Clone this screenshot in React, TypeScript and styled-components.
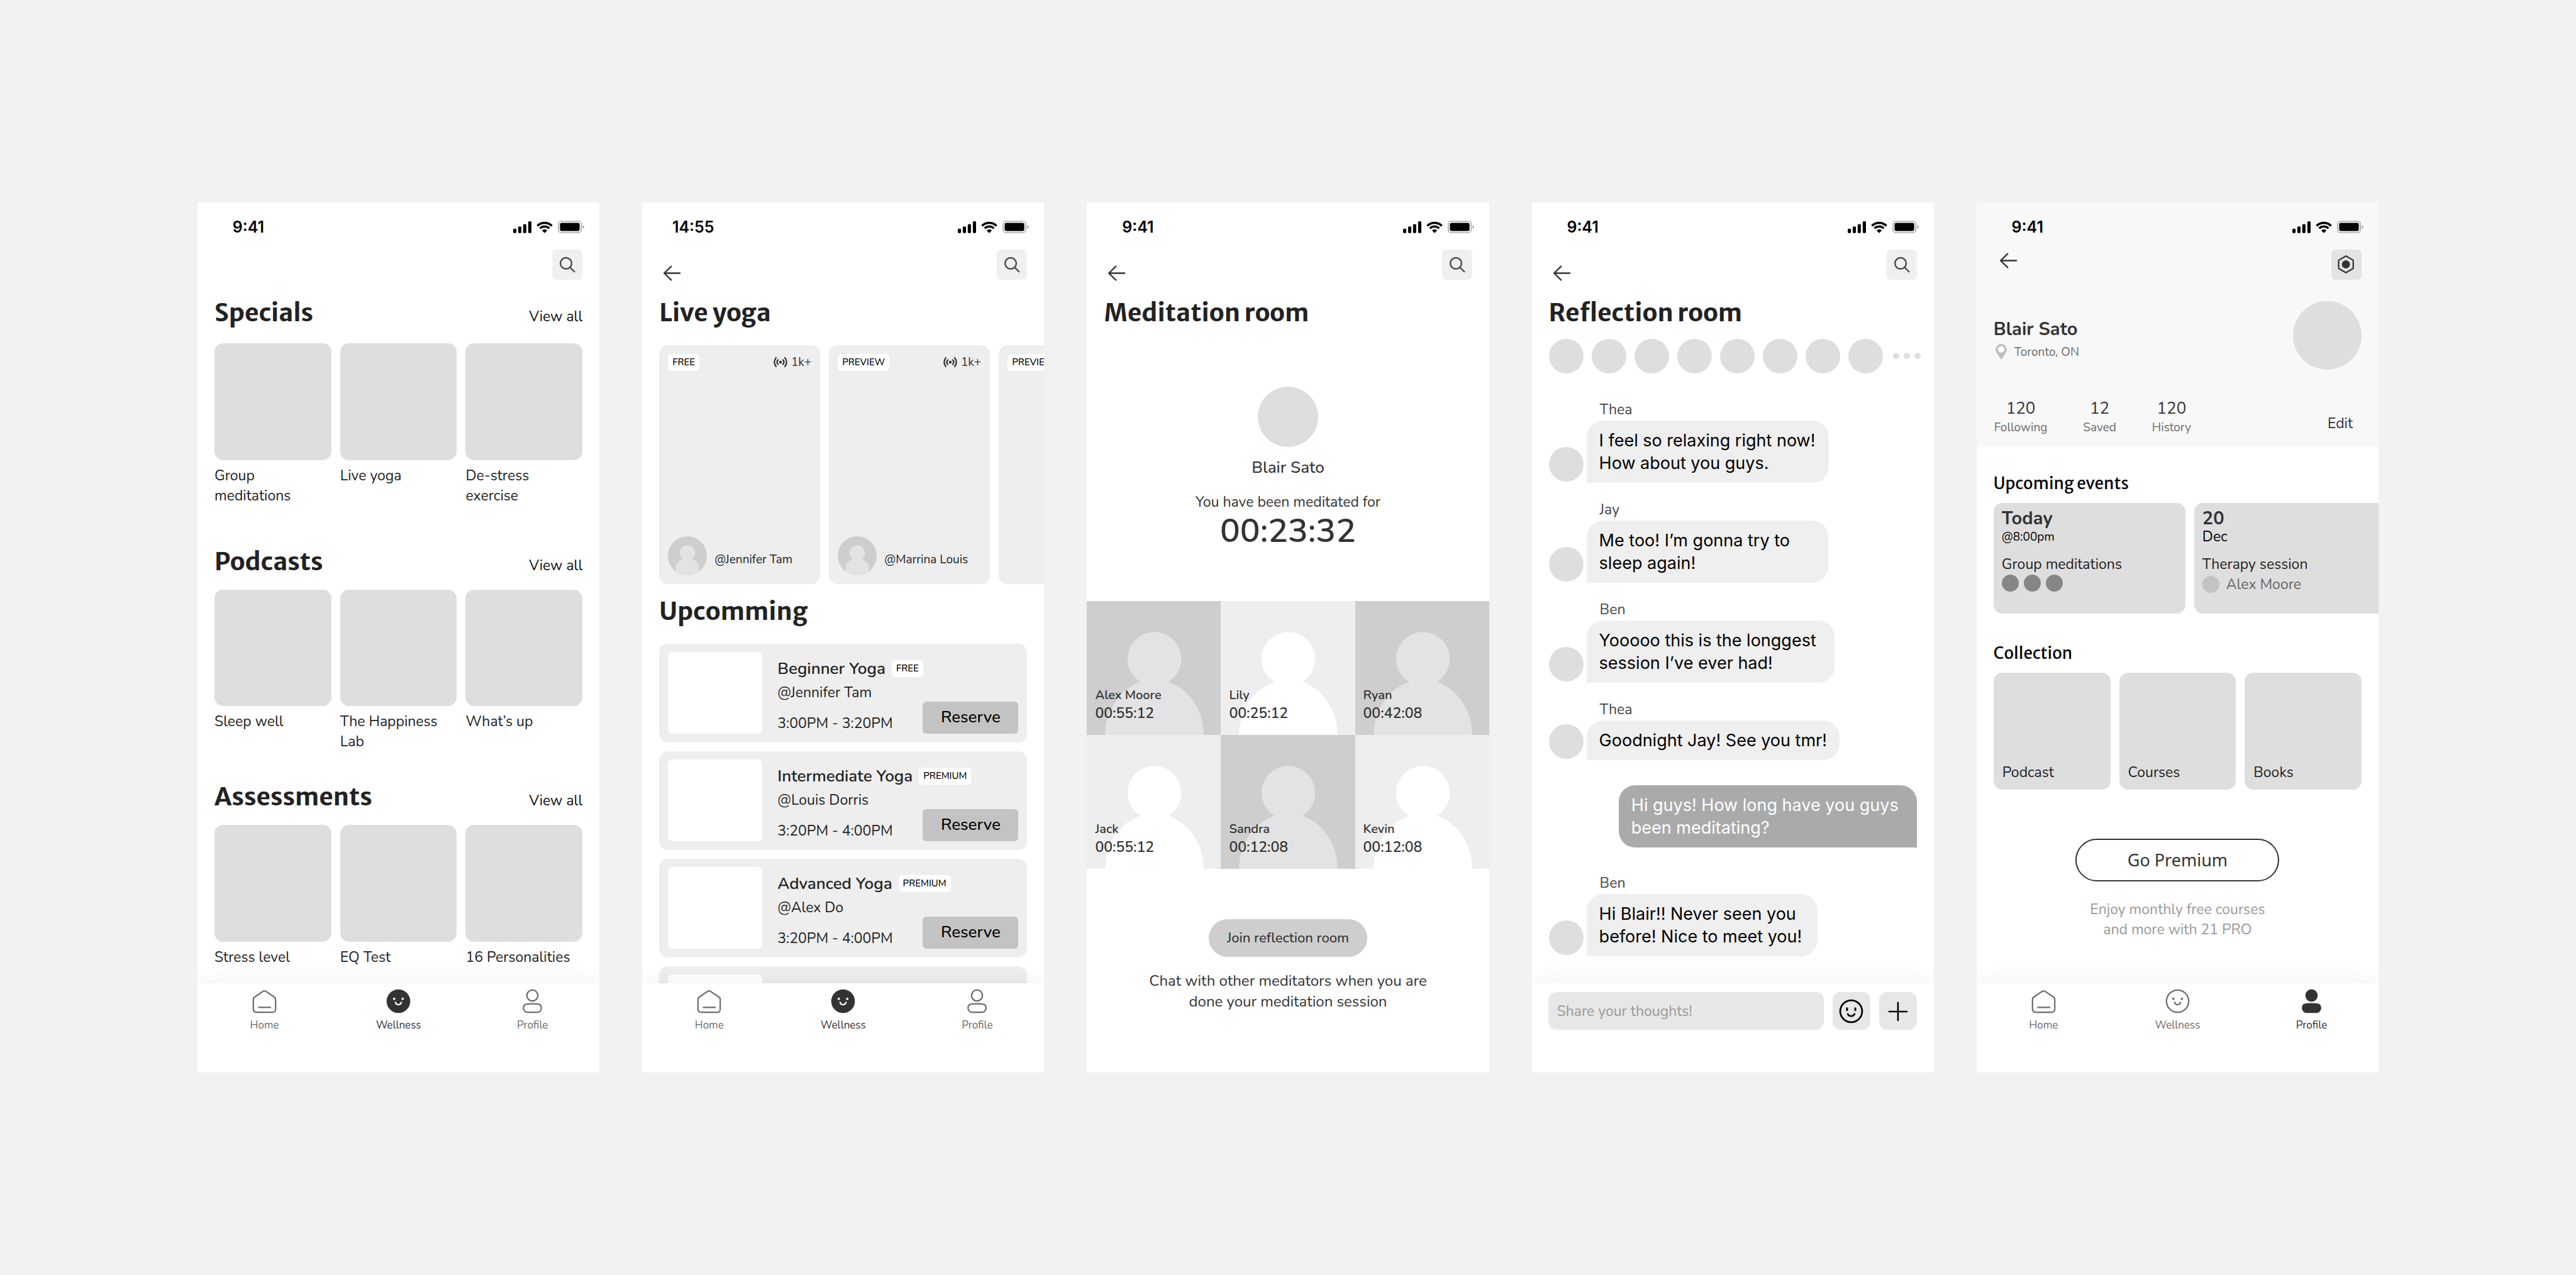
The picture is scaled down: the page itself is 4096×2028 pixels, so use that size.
import React from 'react';
import styled, { createGlobalStyle, css } from 'styled-components';

const body = `'Nunito', 'Lato', sans-serif`;
const display = `'Merriweather Sans', 'Open Sans', sans-serif`;
const system = `'Inter', 'Roboto', sans-serif`;

const GlobalStyle = createGlobalStyle`
  *, *::before, *::after { box-sizing: border-box; }
  body { margin: 0; background: #f2f2f2; color: #222; font-family: ${body}; }
  h1, h2, h3, p, ul { margin: 0; padding: 0; }
  ul { list-style: none; }
  button, input { font: inherit; color: inherit; border: 0; margin: 0; padding: 0; background: none; }
  a { color: inherit; text-decoration: none; }
  svg { display: block; flex: none; }
`;

/* ---------- shell ---------- */

const Board = styled.main`
  min-height: 100vh;
  padding: 0 314px;
  display: flex;
  align-items: center;
  gap: 68px;
`;

const Phone = styled.article`
  flex: 1;
  min-width: 0;
  aspect-ratio: 375 / 812;
  display: flex;
  flex-direction: column;
  overflow: hidden;
  background: #fff;
`;

const Content = styled.div`
  flex: 1;
  min-height: 0;
  overflow: hidden;
`;

const StatusRow = styled.div`
  height: 75px;
  padding: 4px 24px 0 35px;
  display: flex;
  align-items: center;
  justify-content: space-between;
  color: #000;
`;

const Clock = styled.time`
  width: 92px;
  text-align: center;
  font: 600 25px/32px ${system};
`;

const Indicators = styled.div`
  display: flex;
  align-items: center;
  gap: 8px;
`;

const Toolbar = styled.div<{ $inset?: boolean }>`
  height: 58px;
  padding: 0 27px 0 ${(p) => (p.$inset ? 30 : 27)}px;
  display: flex;
  align-items: ${(p) => (p.$inset ? 'flex-start' : 'flex-end')};
  justify-content: space-between;
`;

const BackButton = styled.button<{ $short?: boolean }>`
  width: 41px;
  height: ${(p) => (p.$short ? 35 : 41)}px;
  display: flex;
  align-items: center;
  justify-content: center;
  color: #333;
`;

const SquareButton = styled.button<{ $dark?: boolean }>`
  width: 48px;
  height: 48px;
  margin-left: auto;
  align-self: flex-start;
  border-radius: 7px;
  background: ${(p) => (p.$dark ? '#e3e3e3' : '#f0f0f0')};
`;

const Title = styled.h1`
  font: 700 39px/48px ${display};
  color: #222;
`;

const TitleBar = styled.div<{ $top: number }>`
  margin-top: ${(p) => p.$top}px;
  padding: 0 27px;
  display: flex;
  align-items: baseline;
  justify-content: space-between;
`;

/* ---------- icons ---------- */

const Signal = () => (
  <svg width="29" height="19" viewBox="0 0 34 22" fill="currentColor">
    <rect x="0" y="13.7" width="6" height="8" rx="1.8" />
    <rect x="9.3" y="9.4" width="6" height="12.3" rx="1.8" />
    <rect x="18.5" y="5" width="6" height="16.7" rx="1.8" />
    <rect x="28" y="0" width="6" height="21.7" rx="1.8" />
  </svg>
);

const Wifi = () => (
  <svg width="26" height="19" viewBox="0 0 31 22" fill="none" stroke="currentColor" strokeWidth="4.2">
    <path d="M1.7 8.3a19.5 19.5 0 0 1 27.6 0" />
    <path d="M6.8 13.2a12.4 12.4 0 0 1 17.4 0" />
    <path d="M15.5 22l-4.9-5.1a7.1 7.1 0 0 1 9.8 0z" fill="currentColor" stroke="none" />
  </svg>
);

const Battery = () => (
  <svg width="42" height="20" viewBox="0 0 49 23">
    <rect x="1" y="1" width="42.4" height="21" rx="5.6" fill="none" stroke="#ababab" strokeWidth="2" />
    <rect x="4" y="4" width="36.4" height="15" rx="3" fill="#000" />
    <path d="M46 8c1.7 .7 2.9 2 2.9 3.5s-1.2 2.8-2.9 3.5z" fill="#a6a6a6" />
  </svg>
);

const SearchIcon = () => (
  <svg width="48" height="48" viewBox="0 0 56 56" fill="none" stroke="#4a4a4a" strokeWidth="2.8" strokeLinecap="round">
    <circle cx="25.7" cy="25.5" r="10.4" />
    <path d="M33.3 33.1l8 8" />
  </svg>
);

const SettingsIcon = () => (
  <svg width="48" height="48" viewBox="0 0 56 56" fill="none" stroke="#333" strokeWidth="2.6" strokeLinejoin="round">
    <path d="M27 12l13.5 7.7v15.4L27 42.8l-13.5-7.7V19.7z" />
    <circle cx="27" cy="27.4" r="7.6" fill="#333" stroke="none" />
  </svg>
);

const ArrowIcon = () => (
  <svg width="41" height="41" viewBox="0 0 48 48" fill="none" stroke="currentColor" strokeWidth="2.8" strokeLinecap="round" strokeLinejoin="round">
    <path d="M22.5 11.3L9.5 24l13 12.7M9.5 24h29.2" />
  </svg>
);

const HomeIcon = () => (
  <svg width="41" height="41" viewBox="0 0 48 48" fill="none" stroke="currentColor" strokeWidth="2.6">
    <path d="M3.3 39V20.8a5.5 5.5 0 0 1 2.6-4.7L21.2 5.7a5.4 5.4 0 0 1 5.6 0l15.3 10.4a5.5 5.5 0 0 1 2.6 4.7V39a5.7 5.7 0 0 1-5.7 5.7H9A5.7 5.7 0 0 1 3.3 39z" />
    <path d="M12.3 35.5h24" />
  </svg>
);

const SmileIcon = ({ filled = false }: { filled?: boolean }) => {
  const face = filled ? '#fff' : 'currentColor';
  return (
    <svg width="41" height="41" viewBox="0 0 48 48" fill="none">
      <circle cx="24" cy="24" r="20.7" fill={filled ? 'currentColor' : 'none'} stroke="currentColor" strokeWidth="2.6" />
      <circle cx="16.1" cy="19.5" r="2.2" fill={face} />
      <circle cx="31.9" cy="19.5" r="2.2" fill={face} />
      <path d="M18.4 25c.4 3.2 2.4 5.4 5.6 5.4s5.2-2.2 5.6-5.4" stroke={face} strokeWidth="2.7" />
    </svg>
  );
};

const EmojiIcon = () => (
  <svg width="41" height="41" viewBox="0 0 48 48" fill="none" stroke="#000" strokeWidth="3.2">
    <circle cx="24" cy="24" r="20.4" />
    <path d="M16.3 18.5v3.500M31.700 18.500v3.500" strokeWidth="3.6" strokeLinecap="round" />
    <path d="M17.3 28c1.2 3.600 3.300 5 6.700 5s5.500-1.400 6.700-5" />
  </svg>
);

const PlusIcon = () => (
  <svg width="41" height="41" viewBox="0 0 48 48" fill="none" stroke="#000" strokeWidth="3" strokeLinecap="round">
    <path d="M24.5 8v33M8 24.500h33" />
  </svg>
);

const PersonIcon = ({ filled = false }: { filled?: boolean }) => (
  <svg width="41" height="41" viewBox="0 0 48 48" fill={filled ? 'currentColor' : 'none'} stroke="currentColor" strokeWidth="2.6">
    <circle cx="24" cy="13.4" r="10.2" />
    <path d="M7.3 36.5c0-4.5 3.4-7 7.5-7.3 6-.5 12.4-.5 18.4 0 4.1.3 7.5 2.8 7.5 7.3v.4c0 4.3-3.5 7.8-7.8 7.8H15.1c-4.3 0-7.8-3.5-7.8-7.8z" />
  </svg>
);

const BroadcastIcon = () => (
  <svg width="22" height="18" viewBox="0 0 27 21" fill="none" stroke="#333" strokeWidth="2.8" strokeLinecap="round">
    <circle cx="13.5" cy="10.5" r="2.7" fill="#333" stroke="none" />
    <path d="M8.6 6.2q-3.6 4.3 0 8.6M18.4 6.2q3.6 4.3 0 8.6" />
    <path d="M4.8 2q-6.4 8.5 0 17M22.2 2q6.4 8.5 0 17" />
  </svg>
);

const PinIcon = () => (
  <svg width="18" height="25" viewBox="0 0 21 29">
    <path d="M10.5 29L2.6 17.3A10.5 10.5 0 1 1 18.4 17.3z" fill="#bfbfbf" />
    <circle cx="10.5" cy="10" r="6" fill="#fff" />
  </svg>
);

const AvatarPerson = () => (
  <svg width="62" height="62" viewBox="0 0 62 62">
    <defs>
      <clipPath id="avatar-clip"><circle cx="31" cy="31" r="31" /></clipPath>
    </defs>
    <g clipPath="url(#avatar-clip)">
      <rect width="62" height="62" fill="#cecece" />
      <circle cx="31" cy="26.5" r="12.3" fill="#e3e3e3" />
      <ellipse cx="31" cy="50.5" rx="18.6" ry="15.5" fill="#e3e3e3" />
    </g>
  </svg>
);

/* ---------- shared pieces ---------- */

const StatusBar = ({ time }: { time: string }) => (
  <StatusRow>
    <Clock>{time}</Clock>
    <Indicators>
      <Signal />
      <Wifi />
      <Battery />
    </Indicators>
  </StatusRow>
);

const TopBar = ({ back = true }: { back?: boolean }) => (
  <Toolbar>
    {back && <BackButton type="button" aria-label="Back"><ArrowIcon /></BackButton>}
    <SquareButton type="button" aria-label="Search"><SearchIcon /></SquareButton>
  </Toolbar>
);

const bottomBar = css`
  flex: none;
  position: relative;
  height: 142px;
  background: #fff;
  box-shadow: 0 0 34px rgba(0, 0, 0, 0.07);
`;

const Nav = styled.nav`
  ${bottomBar}
  display: grid;
  grid-template-columns: repeat(3, 1fr);
  align-items: start;
`;

const NavLink = styled.a<{ $active: boolean }>`
  padding-top: 8px;
  display: flex;
  flex-direction: column;
  align-items: center;
  gap: 6px;
  font-size: 17px;
  line-height: 24px;
  color: ${(p) => (p.$active ? '#333' : '#6b6b6b')};
`;

const BottomNav = ({ active }: { active: 'wellness' | 'profile' }) => (
  <Nav>
    <NavLink href="#home" $active={false}><HomeIcon />Home</NavLink>
    <NavLink href="#wellness" $active={active === 'wellness'}>
      <SmileIcon filled={active === 'wellness'} />Wellness
    </NavLink>
    <NavLink href="#profile" $active={active === 'profile'}>
      <PersonIcon filled={active === 'profile'} />Profile
    </NavLink>
  </Nav>
);

const Circle = styled.span<{ $size: number; $color?: string }>`
  flex: none;
  display: block;
  width: ${(p) => p.$size}px;
  height: ${(p) => p.$size}px;
  border-radius: 50%;
  background: ${(p) => p.$color ?? '#dedede'};
`;

const TileGrid = styled.ul<{ $top: number }>`
  margin-top: ${(p) => p.$top}px;
  padding: 0 27px;
  display: grid;
  grid-template-columns: repeat(3, 1fr);
  gap: 14px;
`;

const Tile = styled.div`
  aspect-ratio: 1;
  border-radius: 14px;
  background: #dedede;
  display: flex;
  align-items: flex-end;
  padding: 0 14px 11px;
  font-size: 23px;
  line-height: 32px;
`;

const TileLabel = styled.p`
  margin-top: 9px;
  max-width: 176px;
  min-height: 64px;
  font-size: 23px;
  line-height: 32px;
`;

/* ---------- wellness home ---------- */

const ViewAll = styled.a`
  font-size: 23px;
  line-height: 32px;
  color: #111;
`;

const shelves = [
  { title: 'Specials', top: 19, gap: 24, items: ['Group meditations', 'Live yoga', 'De-stress exercise'] },
  { title: 'Podcasts', top: 65, gap: 20, items: ['Sleep well', 'The Happiness Lab', 'What’s up'] },
  { title: 'Assessments', top: 48, gap: 20, items: ['Stress level', 'EQ Test', '16 Personalities'] },
];

const HomeScreen = () => (
  <Phone>
    <Content>
      <StatusBar time="9:41" />
      <TopBar back={false} />
      {shelves.map((shelf) => (
        <section key={shelf.title}>
          <TitleBar $top={shelf.top}>
            <Title as="h2">{shelf.title}</Title>
            <ViewAll href="#all">View all</ViewAll>
          </TitleBar>
          <TileGrid $top={shelf.gap}>
            {shelf.items.map((item) => (
              <li key={item}>
                <Tile />
                <TileLabel>{item}</TileLabel>
              </li>
            ))}
          </TileGrid>
        </section>
      ))}
    </Content>
    <BottomNav active="wellness" />
  </Phone>
);

/* ---------- live yoga ---------- */

const Carousel = styled.ul<{ $top: number }>`
  margin-top: ${(p) => p.$top}px;
  padding-left: 27px;
  display: flex;
  gap: 14px;
  overflow: hidden;
`;

const LiveCard = styled.li`
  flex: none;
  width: 256px;
  height: 380px;
  padding: 14px;
  border-radius: 14px;
  background: #eee;
  display: flex;
  flex-direction: column;
  justify-content: space-between;
`;

const CardTop = styled.div`
  display: flex;
  align-items: center;
  justify-content: space-between;
`;

const Viewers = styled.span`
  display: flex;
  align-items: center;
  gap: 6px;
  font-size: 19px;
  line-height: 26px;
  color: #333;
`;

const Host = styled.div`
  display: flex;
  align-items: flex-end;
  gap: 12px;
`;

const HostName = styled.span`
  padding-bottom: 12px;
  font-size: 19px;
  line-height: 26px;
  white-space: nowrap;
`;

const Chip = styled.span`
  flex: none;
  padding: 0 7px;
  border-radius: 6px;
  background: #fff;
  color: #000;
  font-size: 15px;
  font-weight: 500;
  line-height: 27px;
`;

const ClassList = styled.ul`
  margin-top: 27px;
  padding: 0 27px;
  display: grid;
  gap: 14px;
`;

const ClassCard = styled.li`
  padding: 13px 14px 14px;
  border-radius: 14px;
  background: #eee;
  display: flex;
  gap: 24px;
`;

const Thumb = styled.div`
  flex: none;
  width: 150px;
  height: 130px;
  border-radius: 7px;
  background: #fff;
`;

const ClassInfo = styled.div`
  flex: 1;
  padding-top: 10px;
  display: flex;
  flex-direction: column;
  font-size: 23px;
  line-height: 32px;
`;

const ClassTitle = styled.div`
  margin-bottom: 5px;
  display: flex;
  align-items: center;
  gap: 10px;

  h3 {
    font-size: 26px;
    font-weight: 600;
    line-height: 34px;
  }
`;

const ClassFoot = styled.div`
  margin-top: auto;
  height: 32px;
  display: flex;
  align-items: flex-end;
  justify-content: space-between;
`;

const ReserveButton = styled.button`
  width: 152px;
  height: 51px;
  border-radius: 6px;
  background: #c3c3c3;
  color: #000;
  font-size: 26px;
  font-weight: 500;
`;

const liveCards = [
  { badge: 'FREE', viewers: '1k+', host: '@Jennifer Tam' },
  { badge: 'PREVIEW', viewers: '1k+', host: '@Marrina Louis' },
  { badge: 'PREVIEW' },
];

const classes = [
  { name: 'Beginner Yoga', badge: 'FREE', host: '@Jennifer Tam', time: '3:00PM - 3:20PM' },
  { name: 'Intermediate Yoga', badge: 'PREMIUM', host: '@Louis Dorris', time: '3:20PM - 4:00PM' },
  { name: 'Advanced Yoga', badge: 'PREMIUM', host: '@Alex Do', time: '3:20PM - 4:00PM' },
];

const YogaScreen = () => (
  <Phone>
    <Content>
      <StatusBar time="14:55" />
      <TopBar />
      <TitleBar $top={19}><Title>Live yoga</Title></TitleBar>
      <Carousel $top={27}>
        {liveCards.map((card, i) => (
          <LiveCard key={i}>
            <CardTop>
              <Chip>{card.badge}</Chip>
              {card.viewers && <Viewers><BroadcastIcon />{card.viewers}</Viewers>}
            </CardTop>
            {card.host && <Host><AvatarPerson /><HostName>{card.host}</HostName></Host>}
          </LiveCard>
        ))}
      </Carousel>
      <TitleBar $top={20}><Title as="h2">Upcomming</Title></TitleBar>
      <ClassList>
        {classes.map((c) => (
          <ClassCard key={c.name}>
            <Thumb />
            <ClassInfo>
              <ClassTitle><h3>{c.name}</h3><Chip>{c.badge}</Chip></ClassTitle>
              <span>{c.host}</span>
              <ClassFoot>
                <span>{c.time}</span>
                <ReserveButton type="button">Reserve</ReserveButton>
              </ClassFoot>
            </ClassInfo>
          </ClassCard>
        ))}
        <ClassCard><Thumb /></ClassCard>
      </ClassList>
    </Content>
    <BottomNav active="wellness" />
  </Phone>
);

/* ---------- meditation room ---------- */

const Session = styled.section`
  height: 434px;
  padding-top: 93px;
  display: flex;
  flex-direction: column;
  align-items: center;
  color: #333;
`;

const SessionName = styled.h2`
  margin-top: 16px;
  font-size: 26px;
  font-weight: 500;
  line-height: 34px;
`;

const SessionNote = styled.p`
  margin-top: 22px;
  font-size: 23px;
  line-height: 32px;
`;

const Timer = styled.time`
  font-size: 53px;
  font-weight: 600;
  line-height: 60px;
`;

const RoomGrid = styled.ul`
  display: grid;
  grid-template-columns: repeat(3, 1fr);
`;

const RoomTile = styled.li<{ $dark: boolean }>`
  aspect-ratio: 1;
  display: grid;
  background: ${(p) => (p.$dark ? '#cecece' : '#eee')};
  color: ${(p) => (p.$dark ? '#e3e3e3' : '#fff')};

  > * { grid-area: 1 / 1; }
  > svg { width: 100%; height: 100%; }
`;

const RoomLabel = styled.div`
  align-self: end;
  padding: 0 13px 20px;
  color: #333;
  font-size: 23px;
  font-weight: 600;
  line-height: 29px;
  z-index: 1;
`;

const RoomName = styled.div`
  font-size: 20px;
`;

const JoinArea = styled.section`
  padding: 80px 27px 0;
  display: flex;
  flex-direction: column;
  align-items: center;
  color: #333;
`;

const JoinButton = styled.button`
  width: 252px;
  height: 60px;
  border-radius: 30px;
  background: #cecece;
  font-size: 22px;
  font-weight: 500;
`;

const JoinNote = styled.p`
  margin-top: 22px;
  max-width: 460px;
  font-size: 24px;
  line-height: 33px;
  text-align: center;
`;

const people = [
  { name: 'Alex Moore', time: '00:55:12', dark: true },
  { name: 'Lily', time: '00:25:12', dark: false },
  { name: 'Ryan', time: '00:42:08', dark: true },
  { name: 'Jack', time: '00:55:12', dark: false },
  { name: 'Sandra', time: '00:12:08', dark: true },
  { name: 'Kevin', time: '00:12:08', dark: false },
];

const MeditationScreen = () => (
  <Phone>
    <StatusBar time="9:41" />
    <TopBar />
    <TitleBar $top={19}><Title>Meditation room</Title></TitleBar>
    <Session>
      <Circle $size={96} />
      <SessionName>Blair Sato</SessionName>
      <SessionNote>You have been meditated for</SessionNote>
      <Timer>00:23:32</Timer>
    </Session>
    <RoomGrid>
      {people.map((p) => (
        <RoomTile key={p.name} $dark={p.dark}>
          <svg viewBox="0 0 213 213" fill="currentColor">
            <circle cx="107.5" cy="92" r="42.7" />
            <ellipse cx="107.5" cy="213" rx="78.3" ry="88" />
          </svg>
          <RoomLabel><RoomName>{p.name}</RoomName>{p.time}</RoomLabel>
        </RoomTile>
      ))}
    </RoomGrid>
    <JoinArea>
      <JoinButton type="button">Join reflection room</JoinButton>
      <JoinNote>Chat with other meditators when you are done your meditation session</JoinNote>
    </JoinArea>
  </Phone>
);

/* ---------- reflection room ---------- */

const Members = styled.div`
  margin-top: 17px;
  padding-left: 27px;
  display: flex;
  align-items: center;
  gap: 13px;
`;

const More = styled.div`
  padding-left: 3px;
  display: flex;
  gap: 7px;
`;

const Thread = styled.ul`
  margin-top: 41px;
  padding: 0 27px;
  display: grid;
  gap: 26px;
`;

const Sender = styled.div`
  padding-left: 81px;
  font-size: 23px;
  line-height: 34px;
  color: #444;
`;

const MessageRow = styled.div<{ $own?: boolean }>`
  padding: ${(p) => (p.$own ? 14 : 0)}px 0;
  display: flex;
  align-items: flex-end;
  gap: 5px;
  justify-content: ${(p) => (p.$own ? 'flex-end' : 'flex-start')};
`;

const SenderAvatar = styled.span`
  padding-bottom: 2px;
`;

const Bubble = styled.p<{ $own?: boolean; $max: number }>`
  max-width: ${(p) => p.$max}px;
  padding: 14px 20px 13px;
  border-radius: ${(p) => (p.$own ? '26px 26px 0 26px' : '26px 26px 26px 0')};
  background: ${(p) => (p.$own ? '#aaa' : '#efefef')};
  color: ${(p) => (p.$own ? '#fff' : '#000')};
  font: 400 27px/36px ${system};
`;

const Composer = styled.form`
  ${bottomBar}
  padding: 14px 27px 0 26px;
  display: flex;
  align-items: flex-start;
  gap: 14px;
`;

const ThoughtInput = styled.input`
  flex: 1;
  min-width: 0;
  height: 60px;
  padding: 0 14px;
  border-radius: 13px;
  background: #e7e7e7;
  font-size: 23px;
  &::placeholder { color: #999; opacity: 1; }
`;

const ComposerButton = styled.button`
  width: 60px;
  height: 60px;
  border-radius: 13px;
  background: #e7e7e7;
  display: grid;
  place-items: center;
`;

const messages = [
  { from: 'Thea', max: 385, text: 'I feel so relaxing right now! How about you guys.' },
  { from: 'Jay', max: 384, text: 'Me too! I’m gonna try to sleep again!' },
  { from: 'Ben', max: 394, text: 'Yooooo this is the longgest session I’ve ever had!' },
  { from: 'Thea', max: 420, text: 'Goodnight Jay! See you tmr!' },
  { own: true, max: 474, text: 'Hi guys! How long have you guys been meditating?' },
  { from: 'Ben', max: 367, text: 'Hi Blair!! Never seen you before! Nice to meet you!' },
];

const ReflectionScreen = () => (
  <Phone>
    <Content>
      <StatusBar time="9:41" />
      <TopBar />
      <TitleBar $top={19}><Title>Reflection room</Title></TitleBar>
      <Members>
        {Array.from({ length: 8 }, (_, i) => <Circle key={i} $size={55} />)}
        <More>
          <Circle $size={10} />
          <Circle $size={10} />
          <Circle $size={10} />
        </More>
      </Members>
      <Thread>
        {messages.map((m, i) => (
          <li key={i}>
            {m.from && <Sender>{m.from}</Sender>}
            <MessageRow $own={m.own}>
              {!m.own && <SenderAvatar><Circle $size={55} /></SenderAvatar>}
              <Bubble $own={m.own} $max={m.max}>{m.text}</Bubble>
            </MessageRow>
          </li>
        ))}
      </Thread>
    </Content>
    <Composer>
      <ThoughtInput aria-label="Share your thoughts" placeholder="Share your thoughts!" />
      <ComposerButton type="button" aria-label="Emoji"><EmojiIcon /></ComposerButton>
      <ComposerButton type="button" aria-label="Add"><PlusIcon /></ComposerButton>
    </Composer>
  </Phone>
);

/* ---------- profile ---------- */

const ProfileHeader = styled.header`
  height: 389px;
  background: #f8f8f8;
`;

const Identity = styled.div`
  margin-top: 24px;
  padding: 0 27px;
  display: flex;
  align-items: flex-end;
  justify-content: space-between;
`;

const IdentityText = styled.div`
  padding-bottom: 14px;
  color: #333;
`;

const ProfileName = styled.h1`
  font-size: 29px;
  font-weight: 700;
  line-height: 44px;
`;

const Place = styled.p`
  padding-left: 3px;
  display: flex;
  align-items: center;
  gap: 12px;
  font-size: 19px;
  line-height: 28px;
  color: #6b6b6b;
`;

const StatsRow = styled.div`
  margin-top: 45px;
  padding: 0 41px 0 28px;
  display: flex;
  justify-content: space-between;
  align-items: flex-end;
`;

const Stats = styled.ul`
  display: flex;
  gap: 57px;
`;

const Stat = styled.li`
  text-align: center;
  font-size: 19px;
  line-height: 26px;
  color: #6b6b6b;
`;

const StatValue = styled.div`
  font-size: 26px;
  line-height: 34px;
  color: #333;
`;

const EditButton = styled.button`
  font-size: 23px;
  line-height: 38px;
  color: #333;
`;

const Subheading = styled.h2<{ $top: number }>`
  margin-top: ${(p) => p.$top}px;
  padding: 0 27px;
  font: 500 26px/36px ${display};
  color: #000;
`;

const EventCard = styled.li`
  flex: none;
  width: 305px;
  height: 176px;
  padding: 9px 13px;
  border-radius: 14px;
  background: #dedede;
`;

const EventDay = styled.h3`
  font-size: 29px;
  font-weight: 700;
  line-height: 32px;
  color: #333;
`;

const EventTime = styled.p<{ $large?: boolean }>`
  font-size: ${(p) => (p.$large ? 23 : 19)}px;
  line-height: 26px;
  color: #000;
`;

const EventName = styled.p`
  margin-top: 15px;
  font-size: 23px;
  line-height: 32px;
`;

const Attendees = styled.div`
  display: flex;
  gap: 8px;
`;

const Therapist = styled.div`
  display: flex;
  align-items: center;
  gap: 11px;
  font-size: 23px;
  line-height: 32px;
  color: #666;
`;

const Upsell = styled.section`
  padding-top: 78px;
  display: flex;
  flex-direction: column;
  align-items: center;
`;

const PremiumButton = styled.button`
  width: 324px;
  height: 68px;
  border: 2px solid #333;
  border-radius: 34px;
  color: #333;
  font: 400 27px/36px 'Noto Sans', 'Open Sans', sans-serif;
`;

const UpsellNote = styled.p`
  margin-top: 29px;
  max-width: 300px;
  font-size: 23px;
  line-height: 32px;
  text-align: center;
  color: #999;
`;

const ProfileScreen = () => (
  <Phone>
    <Content>
      <ProfileHeader>
        <StatusBar time="9:41" />
        <Toolbar $inset>
          <BackButton type="button" aria-label="Back" $short><ArrowIcon /></BackButton>
          <SquareButton type="button" aria-label="Settings" $dark><SettingsIcon /></SquareButton>
        </Toolbar>
        <Identity>
          <IdentityText>
            <ProfileName>Blair Sato</ProfileName>
            <Place><PinIcon />Toronto, ON</Place>
          </IdentityText>
          <Circle $size={109} />
        </Identity>
        <StatsRow>
          <Stats>
            <Stat><StatValue>120</StatValue>Following</Stat>
            <Stat><StatValue>12</StatValue>Saved</Stat>
            <Stat><StatValue>120</StatValue>History</Stat>
          </Stats>
          <EditButton type="button">Edit</EditButton>
        </StatsRow>
      </ProfileHeader>
      <Subheading $top={40}>Upcoming events</Subheading>
      <Carousel $top={13}>
        <EventCard>
          <EventDay>Today</EventDay>
          <EventTime>@8:00pm</EventTime>
          <EventName>Group meditations</EventName>
          <Attendees>
            <Circle $size={27} $color="#868686" />
            <Circle $size={27} $color="#868686" />
            <Circle $size={27} $color="#868686" />
          </Attendees>
        </EventCard>
        <EventCard>
          <EventDay>20</EventDay>
          <EventTime $large>Dec</EventTime>
          <EventName>Therapy session</EventName>
          <Therapist><Circle $size={27} $color="#c3c3c3" />Alex Moore</Therapist>
        </EventCard>
      </Carousel>
      <Subheading $top={45}>Collection</Subheading>
      <TileGrid $top={13}>
        <li><Tile>Podcast</Tile></li>
        <li><Tile>Courses</Tile></li>
        <li><Tile>Books</Tile></li>
      </TileGrid>
      <Upsell>
        <PremiumButton type="button">Go Premium</PremiumButton>
        <UpsellNote>Enjoy monthly free courses and more with 21 PRO</UpsellNote>
      </Upsell>
    </Content>
    <BottomNav active="profile" />
  </Phone>
);

export default function App() {
  return (
    <>
      <GlobalStyle />
      <Board>
        <HomeScreen />
        <YogaScreen />
        <MeditationScreen />
        <ReflectionScreen />
        <ProfileScreen />
      </Board>
    </>
  );
}
